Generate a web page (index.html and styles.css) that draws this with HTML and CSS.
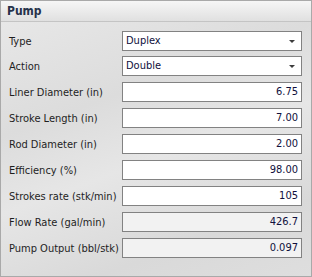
FILE: index.html
```html
<!DOCTYPE html>
<html lang="en">
<head>
  <meta charset="UTF-8">
  <title>Pump</title>
  <link rel="stylesheet" href="styles.css">
</head>
<body>
<div class="panel">
  <div class="panel-header">Pump</div>
  <div class="panel-body">
    <div class="row row-first">
      <label>Type</label>
      <div class="field combo">Duplex<span class="arrow"></span></div>
    </div>
    <div class="row row-combo">
      <label>Action</label>
      <div class="field combo">Double<span class="arrow"></span></div>
    </div>
    <div class="row">
      <label>Liner Diameter (in)</label>
      <div class="field num">6.75</div>
    </div>
    <div class="row">
      <label>Stroke Length (in)</label>
      <div class="field num">7.00</div>
    </div>
    <div class="row">
      <label>Rod Diameter (in)</label>
      <div class="field num">2.00</div>
    </div>
    <div class="row">
      <label>Efficiency (%)</label>
      <div class="field num">98.00</div>
    </div>
    <div class="row">
      <label>Strokes rate (stk/min)</label>
      <div class="field num">105</div>
    </div>
    <div class="row">
      <label>Flow Rate (gal/min)</label>
      <div class="field num readonly">426.7</div>
    </div>
    <div class="row">
      <label>Pump Output (bbl/stk)</label>
      <div class="field num readonly">0.097</div>
    </div>
  </div>
</div>
</body>
</html>
```

FILE: styles.css
```css
html, body {
  margin: 0;
  padding: 0;
}
body {
  font-family: Tahoma, "DejaVu Sans Condensed", "Liberation Sans", sans-serif;
  font-size: 11px;
  background-color: #ffffff;
}
.panel {
  width: 310px;
  height: 275px;
  border: 1px solid #a9a9a9;
  background: linear-gradient(160deg, #e9e9e9 0%, #dcdcdc 35%, #e6e6e6 55%, #d9d9d9 80%, #dedede 100%);
  display: flex;
  flex-direction: column;
}
.panel-header {
  height: 20px;
  line-height: 20px;
  padding-left: 6px;
  font-family: "DejaVu Sans Condensed", "Liberation Sans", sans-serif;
  font-weight: bold;
  font-size: 12px;
  color: #26324a;
  background: linear-gradient(to bottom, #f6f6f6, #e0e0e0);
  border-bottom: 1px solid #c4c4c4;
}
.panel-body {
  padding: 9px 9px 0 8px;
}
.row {
  display: flex;
  align-items: center;
  justify-content: space-between;
  height: 20px;
  margin-top: 6px;
}
.row-first {
  margin-top: 0;
}
.row-combo {
  margin-top: 5px;
}
label {
  color: #1e1e1e;
}
.field {
  box-sizing: border-box;
  width: 180px;
  height: 20px;
  line-height: 18px;
  border: 1px solid #828282;
  background-color: #ffffff;
  color: #10103c;
  padding: 0 3px;
  position: relative;
}
.num {
  text-align: right;
}
.readonly {
  background-color: #f2f2f2;
}
.arrow {
  position: absolute;
  right: 6px;
  top: 8px;
  width: 0;
  height: 0;
  border-left: 3px solid transparent;
  border-right: 3px solid transparent;
  border-top: 3px solid #3c3c3c;
}
```
